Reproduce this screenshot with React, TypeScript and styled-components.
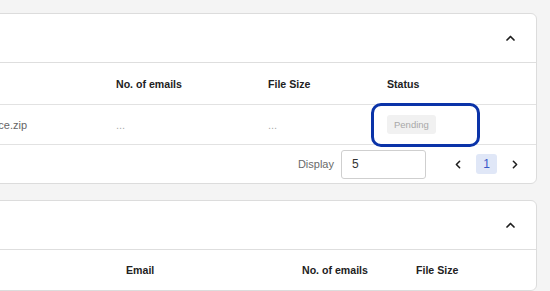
import React from 'react';
import styled, { createGlobalStyle } from 'styled-components';

const GlobalStyle = createGlobalStyle`
  html, body {
    margin: 0;
    padding: 0;
    background: #f4f4f4;
    overflow: hidden;
    font-family: "Liberation Sans", Arial, sans-serif;
  }
`;

const Page = styled.div`
  display: flex;
  flex-direction: column;
  gap: 16px;
  width: 750px;
  margin-left: -213px;
  padding: 13px 0 0 0;
`;

const Card = styled.section`
  background: #fff;
  border: 1px solid #dcdcdc;
  border-radius: 6px;
`;

const CardHeader = styled.div`
  height: 48px;
  display: flex;
  align-items: center;
  justify-content: flex-end;
  padding-right: 21px;
  border-bottom: 1px solid #dedede;
`;

const Row = styled.div<{ $cols: string; $height: number; $last?: boolean }>`
  display: grid;
  grid-template-columns: ${p => p.$cols};
  height: ${p => p.$height}px;
  border-bottom: ${p => (p.$last ? 'none' : '1px solid #e2e2e2')};
`;

const HeadCell = styled.div`
  display: flex;
  align-items: center;
  padding-left: 12px;
  font-size: 10.6px;
  font-weight: 600;
  color: #222;
`;

const Cell = styled.div<{ $muted?: boolean }>`
  position: relative;
  display: flex;
  align-items: center;
  padding-left: 12px;
  font-size: 11px;
  color: ${p => (p.$muted ? '#ababab' : '#666666')};
`;

const FileName = styled.span`
  margin-left: auto;
  margin-right: 77px;
`;

const Badge = styled.span`
  display: inline-flex;
  align-items: center;
  height: 19px;
  padding: 0 7px;
  border-radius: 3px;
  background: #f1f1f1;
  color: #a8a8a8;
  font-size: 9.5px;
`;

const Highlight = styled.div`
  position: absolute;
  left: -4px;
  top: -2px;
  width: 103px;
  height: 38px;
  border: 3px solid #0a33a8;
  border-radius: 10px;
  pointer-events: none;
`;

const Footer = styled.div`
  height: 38px;
  display: flex;
  align-items: center;
  justify-content: flex-end;
  padding-right: 18px;
`;

const Label = styled.span`
  font-size: 11px;
  color: #6a6a6a;
  margin-right: 7px;
`;

const Input = styled.div`
  box-sizing: border-box;
  width: 85px;
  height: 29px;
  border: 1px solid #cfcfcf;
  border-radius: 3px;
  display: flex;
  align-items: center;
  padding-left: 10px;
  font-size: 12px;
  color: #333;
  margin-right: 29px;
`;

const Pager = styled.div`
  display: flex;
  align-items: center;
  gap: 15px;
`;

const PageNum = styled.span<{ $active?: boolean }>`
  width: 21px;
  height: 20px;
  display: flex;
  align-items: center;
  justify-content: center;
  border-radius: 3px;
  font-size: 12px;
  background: ${p => (p.$active ? '#e0e7f7' : 'transparent')};
  color: ${p => (p.$active ? '#3758c8' : '#333')};
`;

const Chevron = ({ dir }: { dir: 'up' | 'left' | 'right' }) => {
  const points =
    dir === 'up' ? '1,5 4.5,1.5 8,5' : dir === 'left' ? '5,1 1.5,4.5 5,8' : '1.5,1 5,4.5 1.5,8';
  return (
    <svg width={dir === 'up' ? 9 : 6} height={dir === 'up' ? 6 : 9} viewBox={dir === 'up' ? '0 0 9 6' : '0 0 6.5 9'}>
      <polyline points={points} fill="none" stroke="#1e1e1e" strokeWidth="1.7" strokeLinecap="round" strokeLinejoin="round" />
    </svg>
  );
};

const uploadCols = '1fr 152px 119px 161px';
const emailCols = '1fr 176px 114px 132px';

function App() {
  return (
    <>
      <GlobalStyle />
      <Page>
        <Card>
          <CardHeader>
            <Chevron dir="up" />
          </CardHeader>
          <Row $cols={uploadCols} $height={41}>
            <HeadCell>File name</HeadCell>
            <HeadCell>No. of emails</HeadCell>
            <HeadCell>File Size</HeadCell>
            <HeadCell>Status</HeadCell>
          </Row>
          <Row $cols={uploadCols} $height={39}>
            <Cell>
              <FileName>invoice.zip</FileName>
            </Cell>
            <Cell $muted>...</Cell>
            <Cell $muted>...</Cell>
            <Cell>
              <Badge>Pending</Badge>
              <Highlight />
            </Cell>
          </Row>
          <Footer>
            <Label>Display</Label>
            <Input>5</Input>
            <Pager>
              <Chevron dir="left" />
              <PageNum $active>1</PageNum>
              <Chevron dir="right" />
            </Pager>
          </Footer>
        </Card>
        <Card>
          <CardHeader>
            <Chevron dir="up" />
          </CardHeader>
          <Row $cols={emailCols} $height={40} $last>
            <HeadCell>Name</HeadCell>
            <HeadCell>Email</HeadCell>
            <HeadCell>No. of emails</HeadCell>
            <HeadCell>File Size</HeadCell>
          </Row>
        </Card>
      </Page>
    </>
  );
}

export default App;
